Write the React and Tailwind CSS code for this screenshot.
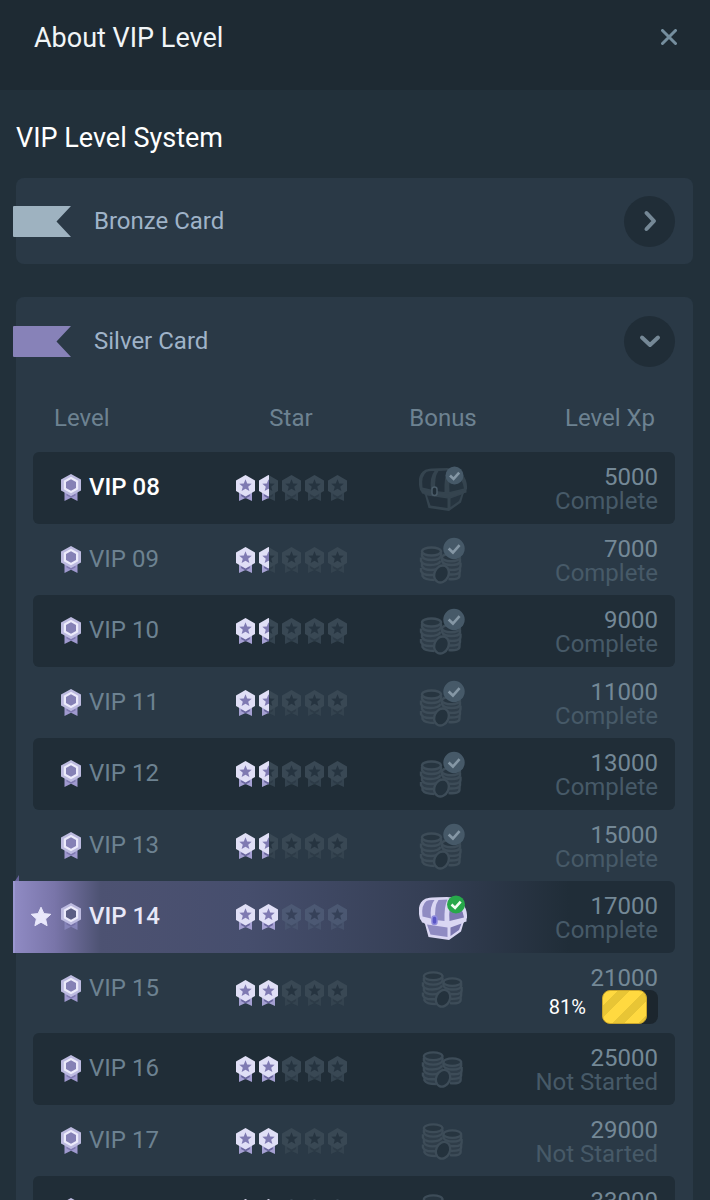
import { useState } from "react";
import clsx from "clsx";

const LEVELS = [
  { name: "VIP 08", stars: 1.5, bonus: "chest", claimed: true, xp: "5000", status: "Complete", strong: true },
  { name: "VIP 09", stars: 1.5, bonus: "coins", claimed: true, xp: "7000", status: "Complete" },
  { name: "VIP 10", stars: 1.5, bonus: "coins", claimed: true, xp: "9000", status: "Complete" },
  { name: "VIP 11", stars: 1.5, bonus: "coins", claimed: true, xp: "11000", status: "Complete" },
  { name: "VIP 12", stars: 1.5, bonus: "coins", claimed: true, xp: "13000", status: "Complete" },
  { name: "VIP 13", stars: 1.5, bonus: "coins", claimed: true, xp: "15000", status: "Complete" },
  { name: "VIP 14", stars: 2, bonus: "chest", claimed: true, xp: "17000", status: "Complete", current: true },
  { name: "VIP 15", stars: 2, bonus: "coins", xp: "21000", progress: 81 },
  { name: "VIP 16", stars: 2, bonus: "coins", xp: "25000", status: "Not Started" },
  { name: "VIP 17", stars: 2, bonus: "coins", xp: "29000", status: "Not Started" },
  { name: "VIP 18", stars: 2, bonus: "coins", xp: "33000", status: "Not Started" },
];

const COLUMNS = "grid grid-cols-[minmax(0,182fr)_minmax(0,152fr)_minmax(0,152fr)_minmax(0,156fr)]";
const STAR = "9.5,4.3 11.2,8.5 15.7,8.8 12.2,11.7 13.4,16.1 9.5,13.7 5.6,16.1 6.8,11.7 3.3,8.8 7.8,8.5";

function Flag({ className }) {
  return (
    <svg viewBox="0 0 58 31" className={clsx("h-[31px] w-[58px] shrink-0 -ml-[3px]", className)} aria-hidden="true">
      <path d="M1 0H58L43.5 15.5L58 31H1Q0 31 0 30V1Q0 0 1 0Z" fill="currentColor" />
    </svg>
  );
}

function RankBadge({ current }) {
  return (
    <svg viewBox="0 0 20 27" className="h-[27px] w-5 shrink-0" aria-hidden="true">
      <path d="M3.5 16H16.5V27L10 23.8L3.5 27Z" fill={current ? "#8583b8" : "#9f99cf"} />
      <path d="M5.500 19.500L10 22L14.500 19.500V21.500L10 23.800L5.500 21.500Z" fill="#6a659c" opacity="0.6" />
      <path d="M10 0L20 5.5V16.5L10 22L0 16.5V5.5Z" fill="#bdbbe0" />
      <path d="M10 2.8L17.2 6.800V15.200L10 19.200L2.800 15.200V6.800Z" fill="#ecebfb" />
      <path d="M10 5.2L15 8V14L10 16.8L5 14V8Z" fill={current ? "#5c5f84" : "#8581b5"} />
    </svg>
  );
}

function StarShape({ ribbon, fold, hex, star }) {
  return (
    <>
      <path d="M3 15H16V26L9.5 23L3 26Z" fill={ribbon} />
      <path d="M5.500 19L9.5 21L13.500 19L14 21L9.5 23.5L5 21Z" fill={fold} />
      <path d="M9.5 0L19 5.4V16L9.5 21.4L0 16V5.4Z" fill={hex} />
      <polygon points={STAR} fill={star} />
    </>
  );
}

function StarBadge({ fill, current }) {
  return (
    <span className="relative block h-[26px] w-[19px] shrink-0">
      {fill < 1 && (
        <svg viewBox="0 0 19 26" className={clsx("block h-[26px] w-[19px]", current && "opacity-70")} aria-hidden="true">
          <StarShape ribbon={current ? "#4b5872" : "#34434f"} fold={current ? "#414d66" : "#2d3b47"} hex={current ? "#52607a" : "#394854"} star={current ? "#333f55" : "#263440"} />
        </svg>
      )}
      {fill > 0 && (
        <span className={clsx("absolute inset-y-0 left-0 overflow-hidden", fill === 1 ? "w-full" : "w-[10px]")}>
          <svg viewBox="0 0 19 26" className="block h-[26px] w-[19px] max-w-none" aria-hidden="true">
            <StarShape ribbon="#a5a0d2" fold="#6b679f" hex="#e0dff6" star="#7f7ab2" />
          </svg>
        </span>
      )}
    </span>
  );
}

function Check({ cx, cy, r, bright }) {
  return (
    <>
      <circle cx={cx} cy={cy} r={r} fill={bright ? "#27a84a" : "#465968"} />
      <path
        d={`M${cx - r * 0.5} ${cy}L${cx - r * 0.1} ${cy + r * 0.38}L${cx + r * 0.52} ${cy - r * 0.32}`}
        fill="none"
        stroke={bright ? "#f2fff4" : "#8597a5"}
        strokeWidth="2.6"
      />
    </>
  );
}

function Chest({ bright }) {
  const line = bright ? "#dad7f3" : "#35444f";
  const panel = bright ? "#8f8bc2" : "#23303b";
  const side = bright ? "#7b77b0" : "#26343f";
  return (
    <svg viewBox="0 0 48 48" className="h-12 w-12 shrink-0" aria-hidden="true">
      <path d="M6 6Q9 4 28 4Q38 4.500 43 10Q48.500 16 48 25L44.500 30L42 38.500L30 47L9.500 44L6 31L1 26Q-3 11 6 6Z" fill={line} />
      <path d="M7.500 8Q10 6.500 15.500 7Q10.500 13 12 25.500L3.500 23.500Q2 12 7.500 8Z" fill={panel} />
      <path d="M19.500 7L28.500 6.500Q25 13 25.500 28L16.500 27Q15 13 19.500 7Z" fill={panel} />
      <path d="M30.500 28Q29.500 14 33 9Q43 12 45 24.500Z" fill={side} />
      <path d="M8 31.500L28.500 34.500V44L11.500 41.500Z" fill={panel} />
      <path d="M31.500 34.500L42.500 30.500L40 37L31.500 43Z" fill={side} />
      <path d="M1.500 25.500L28 29.500L47.500 25.500V28.500L30 33.500L3 29.500Z" fill={line} />
      <rect x="13" y="23" width="5" height="8.500" rx="2.500" fill={bright ? "#5956c6" : "#202d37"} stroke={bright ? "#8f8bdd" : "#4a5b68"} strokeWidth="1.500" />
      <Check cx={bright ? 37 : 35.5} cy={11.5} r={9} bright={bright} />
    </svg>
  );
}

function CoinStacks() {
  return (
    <g fill="none" stroke="#3d4c58" strokeWidth="2.4">
      <path d="M4.500 13V37Q8 41 17 41L19 30L24 26V13Z" fill="#2f3d49" stroke="none" />
      <path d="M25 19V28L31 32V40Q40 40 42 36V19Z" fill="#2f3d49" stroke="none" />
      <ellipse cx="14" cy="12.500" rx="9.500" ry="4" fill="#273540" />
      <path d="M4.500 14V17Q6 21 14 21T23.500 17V14" />
      <path d="M3.500 18.500V22Q5 26 13 26T23 22" />
      <path d="M4.500 24V27Q6 31 13.500 31T22.500 27" />
      <path d="M3.500 29V32Q5 36 12 36H17" />
      <path d="M5 35V37Q7 41 17 41" />
      <ellipse cx="33.500" cy="18.500" rx="9" ry="3.800" fill="#273540" />
      <path d="M24.500 19.500V22Q26 26 34 26T42.500 22.500V19.500" />
      <path d="M29 30.500Q43 32 43 27V23.500" />
      <path d="M31.500 35.500Q42.500 36 42.500 32V28.500" />
      <path d="M31 40Q42 41 42 36.500V34" />
      <ellipse cx="24" cy="35" rx="7" ry="8.800" transform="rotate(25 24 35)" fill="#24323d" />
    </g>
  );
}

function Coins({ claimed }) {
  return (
    <svg viewBox="0 0 48 48" className="h-12 w-12 shrink-0" aria-hidden="true">
      <g transform={claimed ? "translate(-1.500 3)" : "translate(0.500 -1) scale(0.98)"}>
        <CoinStacks />
      </g>
      {claimed && <Check cx={35} cy={12.5} r={10.7} />}
    </svg>
  );
}

function LevelRow({ level, shaded }) {
  const { name, stars, bonus, claimed, xp, status, progress, current, strong } = level;
  return (
    <tr
      className={clsx(
        COLUMNS,
        "relative",
        shaded ? "min-h-[72px]" : "min-h-[71px]",
        current
          ? "-ml-5 rounded-r-md border-l-2 border-[#9a96d0] bg-[linear-gradient(90deg,#8f8ac3_0%,#7975a9_6%,#4d5272_13%,#464e6d_35%,#353f55_62%,#202d38_84%)] pl-[18px]"
          : shaded && "rounded-md bg-[#202d37]"
      )}
    >
      <th
        scope="row"
        className={clsx(
          "relative flex h-[70px] items-center gap-2 pl-7 text-left text-2xl",
          strong || current ? "font-medium" : "font-normal",
          strong ? "text-white" : current ? "text-[#e8e8f8]" : "text-[#6d8291]"
        )}
      >
        {current && (
          <>
            <svg viewBox="0 0 4 6" className="absolute -left-[18px] -top-[6px] h-[6px] w-1" aria-hidden="true">
              <path d="M0 6L4 0V6Z" fill="#67649a" />
            </svg>
            <svg viewBox="0 0 22 21" className="absolute -left-[3px] h-[21px] w-[22px]" aria-hidden="true">
              <path
                d="M11 1.2L13.900 7.600L20.800 8.300L15.600 12.900L17.100 19.700L11 16.200L4.900 19.700L6.400 12.900L1.200 8.300L8.100 7.600Z"
                fill="#e9e8fb"
                stroke="#e9e8fb"
                strokeLinejoin="round"
              />
            </svg>
          </>
        )}
        <RankBadge current={current} />
        {name}
      </th>
      <td className="flex items-center justify-center gap-1">
        {[0, 1, 2, 3, 4].map((i) => (
          <StarBadge key={i} fill={Math.max(0, Math.min(1, stars - i))} current={current} />
        ))}
      </td>
      <td className="flex h-[71px] items-center justify-center">
        {bonus === "chest" ? <Chest bright={current} /> : <Coins claimed={claimed} />}
      </td>
      <td className="pr-[17px] pt-[13px] text-right text-2xl leading-6 text-[#748896]">
        <div>{xp}</div>
        {status && <div className="whitespace-nowrap text-[#475a68]">{status}</div>}
        {progress && (
          <div className="flex items-center justify-end gap-4 pb-[9px]">
            <span className="text-xl leading-6 text-white">{progress}%</span>
            <div
              role="progressbar"
              aria-label={`${name} progress`}
              aria-valuenow={progress}
              aria-valuemin={0}
              aria-valuemax={100}
              className="h-[34px] w-14 rounded-lg bg-[#1c262e]"
            >
              <div
                className="h-full rounded-lg border border-[#c9a52c] bg-[repeating-linear-gradient(135deg,#ffd940_0px,#ffd940_10px,#e8c535_10px,#e8c535_19px)]"
                style={{ width: `${progress}%` }}
              />
            </div>
          </div>
        )}
      </td>
    </tr>
  );
}

function CardHeader({ title, open, onToggle, flagClass }) {
  return (
    <div className="flex h-[86px] items-center pr-[18px]">
      <Flag className={flagClass} />
      <h3 className="ml-[23px] flex-1 text-2xl text-[#9fb3c8]">{title}</h3>
      <button
        type="button"
        aria-label={title}
        aria-expanded={open}
        onClick={onToggle}
        className="flex h-[51px] w-[51px] items-center justify-center rounded-full bg-[#202d37] text-[#758896]"
      >
        <svg viewBox="0 0 24 24" className={clsx("h-6 w-6", open && "rotate-90")} aria-hidden="true">
          <path d="M8.500 4L16 12L8.500 20" fill="none" stroke="currentColor" strokeWidth="4" strokeLinecap="round" strokeLinejoin="round" />
        </svg>
      </button>
    </div>
  );
}

function LevelTable() {
  return (
    <table className="block pl-[17px] pr-[18px]">
      <thead className="block">
        <tr className={clsx(COLUMNS, "h-[68px] items-center text-2xl text-[#6d8291]")}>
          <th scope="col" className="pl-[21px] text-left font-normal">Level</th>
          <th scope="col" className="font-normal">Star</th>
          <th scope="col" className="font-normal">Bonus</th>
          <th scope="col" className="pr-5 text-right font-normal">Level Xp</th>
        </tr>
      </thead>
      <tbody className="block">
        {LEVELS.map((level, i) => (
          <LevelRow key={level.name} level={level} shaded={i % 2 === 0} />
        ))}
      </tbody>
    </table>
  );
}

export default function App() {
  const [bronzeOpen, setBronzeOpen] = useState(false);
  const [silverOpen, setSilverOpen] = useState(true);
  return (
    <div className="flex h-screen flex-col bg-[#22303a] font-[Roboto,sans-serif]">
      <header className="flex h-[90px] shrink-0 items-start justify-between bg-[#1e2a33] pl-[34px] pr-[33px] pt-5">
        <h1 className="text-[27px] leading-9 text-[#f1f5f7]">About VIP Level</h1>
        <button type="button" aria-label="Close" className="mt-[9px] text-[#758e9e]">
          <svg viewBox="0 0 16 16" className="h-4 w-4" aria-hidden="true">
            <path d="M1.500 1.500L14.500 14.500M14.500 1.500L1.500 14.500" fill="none" stroke="currentColor" strokeWidth="3" strokeLinecap="round" />
          </svg>
        </button>
      </header>
      <main className="min-h-0 flex-1 overflow-y-auto pb-8 pl-4 pr-[17px] pt-[30px] [scrollbar-width:none]">
        <h2 className="mb-[22px] text-[27px] leading-9 text-white">VIP Level System</h2>
        <section className="rounded-lg bg-[#2a3946]">
          <CardHeader title="Bronze Card" open={bronzeOpen} onToggle={() => setBronzeOpen(!bronzeOpen)} flagClass="text-[#9eb2c0]" />
        </section>
        <section className="mt-[33px] rounded-lg bg-[#2a3946] pb-5 pt-px">
          <CardHeader title="Silver Card" open={silverOpen} onToggle={() => setSilverOpen(!silverOpen)} flagClass="text-[#8782b8]" />
          {silverOpen && <LevelTable />}
        </section>
      </main>
    </div>
  );
}
